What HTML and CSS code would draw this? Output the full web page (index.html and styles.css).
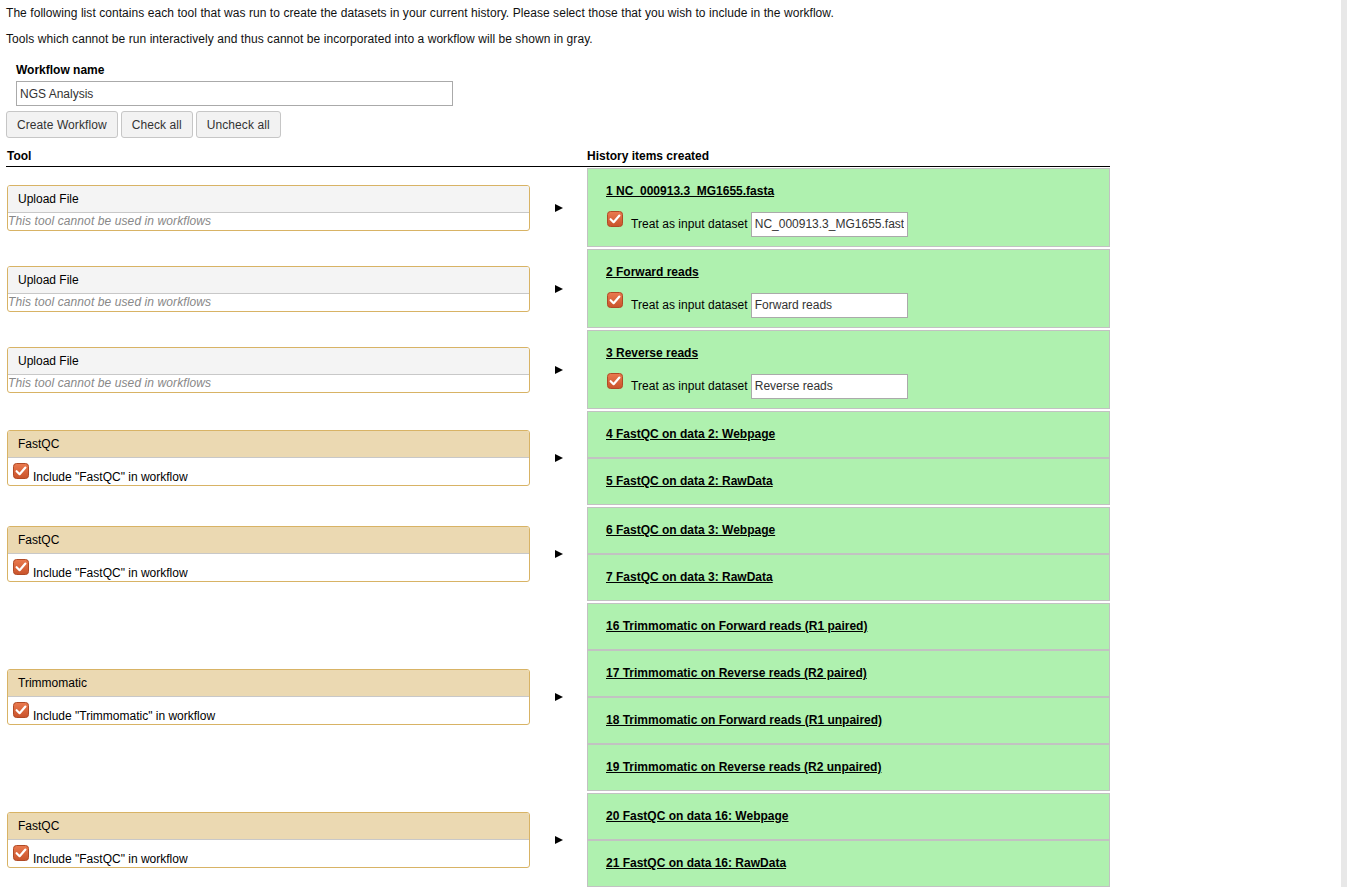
FILE: index.html
```html
<!DOCTYPE html>
<html>
<head>
<meta charset="utf-8">
<link rel="stylesheet" href="styles.css">
</head>
<body>
<div class="page">
<main class="main">
  <p class="intro">The following list contains each tool that was run to create the datasets in your current history. Please select those that you wish to include in the workflow.</p>
  <p class="intro second">Tools which cannot be run interactively and thus cannot be incorporated into a workflow will be shown in gray.</p>

  <div class="form-row">
    <label class="label">Workflow name</label>
    <input class="name-input" type="text" value="NGS Analysis">
  </div>
  <div class="buttons">
    <button class="btn">Create Workflow</button>
    <button class="btn">Check all</button>
    <button class="btn">Uncheck all</button>
  </div>

  <div class="table">
    <div class="head">
      <div class="th">Tool</div>
      <div class="th"></div>
      <div class="th">History items created</div>
    </div>

    <div class="row">
      <div class="tool disabled">
        <div class="tool-title">Upload File</div>
        <div class="tool-note">This tool cannot be used in workflows</div>
      </div>
      <div class="arrow-cell"><span class="arrow"></span></div>
      <div class="items">
        <div class="item">
          <div class="item-title">1 NC_000913.3_MG1655.fasta</div>
          <div class="input-row">
            <span class="cb"><svg width="16" height="16" viewBox="0 0 16 16"><defs><linearGradient id="g1" x1="0" y1="0" x2="0" y2="1"><stop offset="0" stop-color="#ea7a4f"/><stop offset="1" stop-color="#c9532b"/></linearGradient></defs><rect x="0.5" y="0.5" width="15" height="15" rx="3" fill="url(#g1)" stroke="#b04a26"/><path d="M3.6 8.2 L6.6 11.2 L12.4 4.6" fill="none" stroke="#fff" stroke-width="2.2" stroke-linecap="round" stroke-linejoin="round"/></svg></span>
            <span class="treat">Treat as input dataset</span>
            <input class="ds-input" type="text" value="NC_000913.3_MG1655.fasta">
          </div>
        </div>
      </div>
    </div>

    <div class="row">
      <div class="tool disabled">
        <div class="tool-title">Upload File</div>
        <div class="tool-note">This tool cannot be used in workflows</div>
      </div>
      <div class="arrow-cell"><span class="arrow"></span></div>
      <div class="items">
        <div class="item">
          <div class="item-title">2 Forward reads</div>
          <div class="input-row">
            <span class="cb"><svg width="16" height="16" viewBox="0 0 16 16"><rect x="0.5" y="0.5" width="15" height="15" rx="3" fill="url(#g1)" stroke="#b04a26"/><path d="M3.6 8.2 L6.6 11.2 L12.4 4.6" fill="none" stroke="#fff" stroke-width="2.2" stroke-linecap="round" stroke-linejoin="round"/></svg></span>
            <span class="treat">Treat as input dataset</span>
            <input class="ds-input" type="text" value="Forward reads">
          </div>
        </div>
      </div>
    </div>

    <div class="row">
      <div class="tool disabled">
        <div class="tool-title">Upload File</div>
        <div class="tool-note">This tool cannot be used in workflows</div>
      </div>
      <div class="arrow-cell"><span class="arrow"></span></div>
      <div class="items">
        <div class="item">
          <div class="item-title">3 Reverse reads</div>
          <div class="input-row">
            <span class="cb"><svg width="16" height="16" viewBox="0 0 16 16"><rect x="0.5" y="0.5" width="15" height="15" rx="3" fill="url(#g1)" stroke="#b04a26"/><path d="M3.6 8.2 L6.6 11.2 L12.4 4.6" fill="none" stroke="#fff" stroke-width="2.2" stroke-linecap="round" stroke-linejoin="round"/></svg></span>
            <span class="treat">Treat as input dataset</span>
            <input class="ds-input" type="text" value="Reverse reads">
          </div>
        </div>
      </div>
    </div>

    <div class="row">
      <div class="tool">
        <div class="tool-title">FastQC</div>
        <div class="tool-body">
          <span class="cb"><svg width="16" height="16" viewBox="0 0 16 16"><rect x="0.5" y="0.5" width="15" height="15" rx="3" fill="url(#g1)" stroke="#b04a26"/><path d="M3.6 8.2 L6.6 11.2 L12.4 4.6" fill="none" stroke="#fff" stroke-width="2.2" stroke-linecap="round" stroke-linejoin="round"/></svg></span>
          <span class="include">Include "FastQC" in workflow</span>
        </div>
      </div>
      <div class="arrow-cell"><span class="arrow"></span></div>
      <div class="items">
        <div class="item"><div class="item-title">4 FastQC on data 2: Webpage</div></div>
        <div class="item"><div class="item-title">5 FastQC on data 2: RawData</div></div>
      </div>
    </div>

    <div class="row">
      <div class="tool">
        <div class="tool-title">FastQC</div>
        <div class="tool-body">
          <span class="cb"><svg width="16" height="16" viewBox="0 0 16 16"><rect x="0.5" y="0.5" width="15" height="15" rx="3" fill="url(#g1)" stroke="#b04a26"/><path d="M3.6 8.2 L6.6 11.2 L12.4 4.6" fill="none" stroke="#fff" stroke-width="2.2" stroke-linecap="round" stroke-linejoin="round"/></svg></span>
          <span class="include">Include "FastQC" in workflow</span>
        </div>
      </div>
      <div class="arrow-cell"><span class="arrow"></span></div>
      <div class="items">
        <div class="item"><div class="item-title">6 FastQC on data 3: Webpage</div></div>
        <div class="item"><div class="item-title">7 FastQC on data 3: RawData</div></div>
      </div>
    </div>

    <div class="row">
      <div class="tool">
        <div class="tool-title">Trimmomatic</div>
        <div class="tool-body">
          <span class="cb"><svg width="16" height="16" viewBox="0 0 16 16"><rect x="0.5" y="0.5" width="15" height="15" rx="3" fill="url(#g1)" stroke="#b04a26"/><path d="M3.6 8.2 L6.6 11.2 L12.4 4.6" fill="none" stroke="#fff" stroke-width="2.2" stroke-linecap="round" stroke-linejoin="round"/></svg></span>
          <span class="include">Include "Trimmomatic" in workflow</span>
        </div>
      </div>
      <div class="arrow-cell"><span class="arrow"></span></div>
      <div class="items">
        <div class="item"><div class="item-title">16 Trimmomatic on Forward reads (R1 paired)</div></div>
        <div class="item"><div class="item-title">17 Trimmomatic on Reverse reads (R2 paired)</div></div>
        <div class="item"><div class="item-title">18 Trimmomatic on Forward reads (R1 unpaired)</div></div>
        <div class="item"><div class="item-title">19 Trimmomatic on Reverse reads (R2 unpaired)</div></div>
      </div>
    </div>

    <div class="row">
      <div class="tool">
        <div class="tool-title">FastQC</div>
        <div class="tool-body">
          <span class="cb"><svg width="16" height="16" viewBox="0 0 16 16"><rect x="0.5" y="0.5" width="15" height="15" rx="3" fill="url(#g1)" stroke="#b04a26"/><path d="M3.6 8.2 L6.6 11.2 L12.4 4.6" fill="none" stroke="#fff" stroke-width="2.2" stroke-linecap="round" stroke-linejoin="round"/></svg></span>
          <span class="include">Include "FastQC" in workflow</span>
        </div>
      </div>
      <div class="arrow-cell"><span class="arrow"></span></div>
      <div class="items">
        <div class="item"><div class="item-title">20 FastQC on data 16: Webpage</div></div>
        <div class="item"><div class="item-title">21 FastQC on data 16: RawData</div></div>
      </div>
    </div>
  </div>
</main>
<div class="scrolltrack"></div>
</div>
</body>
</html>
```

FILE: styles.css
```css
html, body {
  margin: 0;
  padding: 0;
  height: 887px;
  overflow: hidden;
  background: #fff;
}
body {
  font-family: "Liberation Sans", Arial, sans-serif;
  font-size: 12px;
  color: #111;
}
.page {
  display: flex;
  height: 887px;
}
.main {
  flex: 1;
  padding: 6px 0 0 6px;
  min-width: 0;
}
.scrolltrack {
  width: 6px;
  background: #e8e8e8;
}
.intro {
  margin: 0;
  line-height: 14px;
  letter-spacing: 0.06px;
}
.intro.second {
  margin-top: 12px;
}
.form-row {
  margin-top: 17px;
  padding-left: 10px;
}
.label {
  display: block;
  font-weight: bold;
  line-height: 14px;
  color: #000;
}
.name-input {
  display: block;
  margin-top: 4px;
  width: 437px;
  height: 25px;
  box-sizing: border-box;
  border: 1px solid #aaa;
  padding: 0 3px;
  font-family: "Liberation Sans", Arial, sans-serif;
  font-size: 12px;
  color: #333;
  background: #fff;
}
.buttons {
  display: flex;
  gap: 3px;
  margin-top: 5px;
}
.btn {
  height: 27px;
  padding: 0 10px;
  border: 1px solid #c6c6c6;
  border-radius: 3px;
  background: #f2f2f2;
  font-family: "Liberation Sans", Arial, sans-serif;
  font-size: 12px;
  letter-spacing: 0.08px;
  color: #333;
}
.table {
  width: 1104px;
  margin-top: 11px;
  display: flex;
  flex-direction: column;
  gap: 2px;
}
.head, .row {
  display: grid;
  grid-template-columns: 524px 57px 523px;
}
.head {
  border-bottom: 1px solid #000;
  padding-bottom: 3px;
  margin-bottom: -1px;
}
.th {
  font-weight: bold;
  line-height: 14px;
  color: #000;
  padding-left: 1px;
}
.th:last-child {
  padding-left: 0;
}
.row {
  align-items: center;
}
.tool {
  margin-left: 1px;
  border: 1px solid #d8b365;
  border-radius: 3px;
  overflow: hidden;
}
.tool-title {
  background: #ebd9b2;
  border-bottom: 1px solid #c8c8c8;
  height: 27px;
  box-sizing: border-box;
  padding: 6px 0 0 10px;
  line-height: 14px;
  color: #000;
}
.tool.disabled .tool-title {
  background: #f4f4f4;
}
.tool-note {
  font-style: italic;
  color: #888;
  line-height: 14px;
  height: 17px;
  padding-top: 1px;
  box-sizing: border-box;
  letter-spacing: 0.1px;
}
.tool-body {
  height: 27px;
  box-sizing: border-box;
  display: flex;
  align-items: flex-start;
  padding: 5px 0 0 5px;
}
.cb {
  display: block;
  width: 16px;
  height: 16px;
  flex: none;
}
.cb svg {
  display: block;
}
.include {
  margin: 7px 0 0 4px;
  line-height: 14px;
  color: #000;
}
.arrow-cell {
  display: flex;
  justify-content: center;
}
.arrow {
  display: block;
  width: 0;
  height: 0;
  border-left: 8px solid #000;
  border-top: 4.5px solid transparent;
  border-bottom: 4.5px solid transparent;
  margin-left: 1px;
}
.items {
  display: flex;
  flex-direction: column;
}
.item {
  background: #aff1af;
  border: 1px solid #c2c2c2;
  padding: 15px 18px 15px;
}
.item-title {
  font-weight: bold;
  text-decoration: underline;
  line-height: 15px;
  color: #000;
}
.input-row {
  display: flex;
  align-items: center;
  height: 26px;
  margin-top: 12px;
  margin-bottom: -6px;
}
.input-row .cb {
  align-self: flex-start;
  margin-left: 1px;
}
.treat {
  margin-left: 8px;
  color: #000;
  letter-spacing: 0.05px;
}
.ds-input {
  margin-left: 3px;
  width: 157px;
  height: 25px;
  box-sizing: border-box;
  border: 1px solid #aaa;
  padding: 0 3px;
  font-family: "Liberation Sans", Arial, sans-serif;
  font-size: 12px;
  color: #333;
  background: #fff;
}
```
